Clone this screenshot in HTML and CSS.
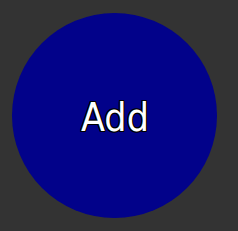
FILE: index.html
```html
<!DOCTYPE html>
<html>
<head>
<meta charset="utf-8">
<link rel="stylesheet" href="styles.css">
</head>
<body>
<div class="stage">
  <button class="add-button">Add</button>
</div>
</body>
</html>
```

FILE: styles.css
```css
html, body {
  margin: 0;
  padding: 0;
  background: #333333;
  width: 238px;
  height: 231px;
  overflow: hidden;
}
.stage {
  padding: 13px 0 0 12px;
  display: flex;
}
.add-button {
  width: 205px;
  height: 205px;
  border-radius: 50%;
  border: none;
  padding: 3px 0 0 1px;
  margin: 0;
  background: #02028a;
  display: flex;
  align-items: center;
  justify-content: center;
  font-family: "DejaVu Sans Condensed", "DejaVu Sans", sans-serif;
  font-stretch: condensed;
  font-size: 39px;
  color: #ffffff;
  text-shadow: 1px 0 0 #000, -1px 0 0 #000, 0 1px 0 #000, 0 -1px 0 #000, 1px 1px 0 #000, -1px -1px 0 #000, 1px -1px 0 #000, -1px 1px 0 #000;
}
```
